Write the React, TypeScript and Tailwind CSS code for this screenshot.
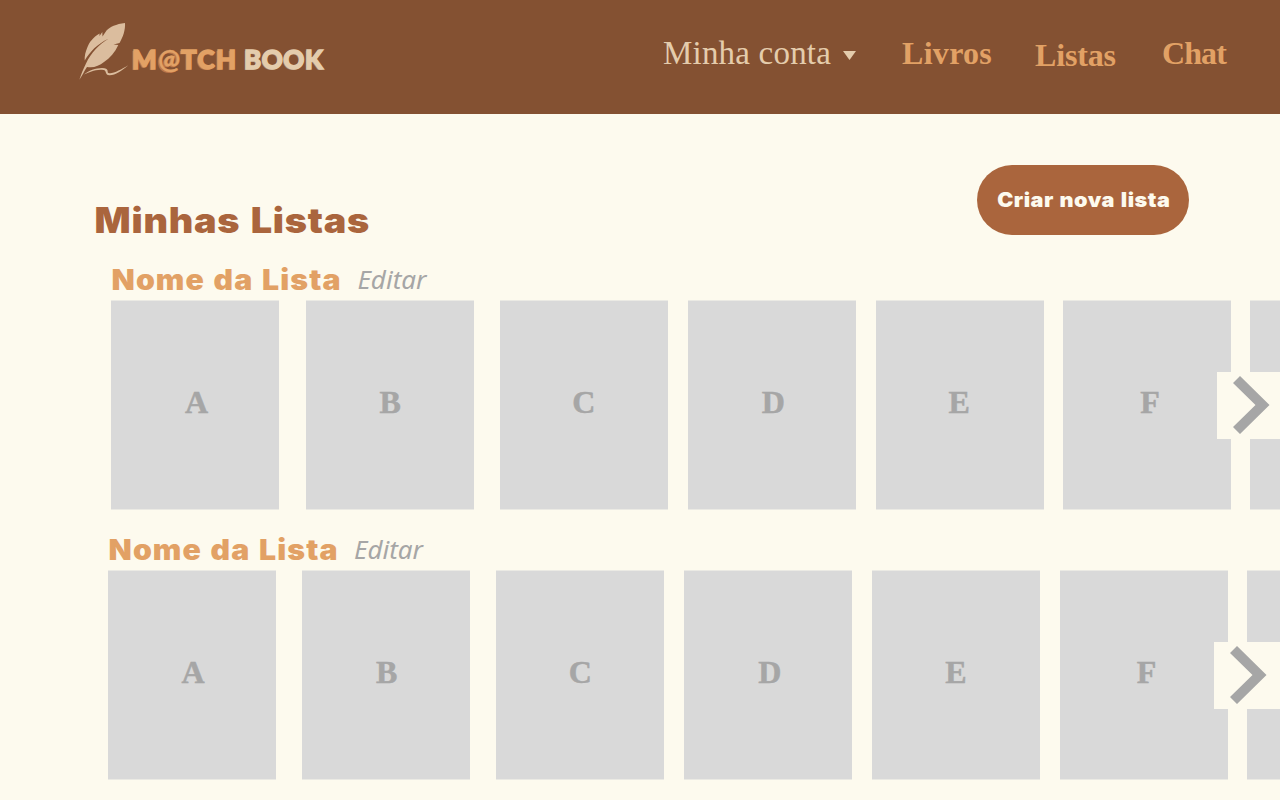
type ListProps = { className: string; arrow: string };

const cards = [
  { letter: 'A', gap: 'ml-0', shift: 'pl-[3px]' },
  { letter: 'B', gap: 'ml-[26.7px]', shift: 'pl-[1px]' },
  { letter: 'C', gap: 'ml-[26px]', shift: 'pl-0' },
  { letter: 'D', gap: 'ml-[20.1px]', shift: 'pl-[3px]' },
  { letter: 'E', gap: 'ml-[20px]', shift: 'pr-[1px]' },
  { letter: 'F', gap: 'ml-[19.7px]', shift: 'pl-[5px]' },
  { letter: '', gap: 'ml-[19px]', shift: 'pl-0' },
];

function Feather() {
  return (
    <svg className="h-[60px] w-[50px] shrink-0" viewBox="0 0 50 60" fill="#dbbd9e">
      <path d="M46 1C37 2 31 5 27.500 8.500L23.500 14.500L23.300 10L20.500 14L20.500 11.500C14 15.500 10.500 20 8.500 25C6.500 29.500 5.400 34 5.700 38.500C11 30 18 22 29.500 16.800C20 22.500 12 31 7 41.500C4.500 46.500 2 52.500 .4 57.800C3 54 5 49.500 8 45C15 46 20 44 25 40C31 36 36 30.500 39.300 23L34.500 22.500L40.500 21C44 15 46.500 8 46 1Z" />
      <path d="M5 52.500C9 48.800 17 46 23 46C31 46 27.500 50.500 29.500 51C33.500 52.500 42 47.500 49.300 43.300C43 48.500 36 53.500 30.500 53.300C25.500 53 28 48.500 24.500 48C17 46.800 10 50.500 5 52.500Z" />
    </svg>
  );
}

function BookList({ className, arrow }: ListProps) {
  return (
    <section className={`relative h-[270px] ${className}`}>
      <div className="flex h-[35px] items-start whitespace-nowrap">
        <h2 className="w-[246.500px] font-['Inter'] text-[28px] leading-[31px] font-black text-[#e2a165]">
          <span className="inline-block origin-left scale-x-[1.08] pl-[0.500px] tracking-[1px] [word-spacing:1.500px]">Nome da Lista</span>
        </h2>
        <a className="font-['Noto_Sans'] text-[26px] leading-[29px] italic text-[#a6a6a6]">Editar</a>
      </div>
      <div className="flex">
        {cards.map((card, i) => (
          <div key={i} className={`flex h-[210px] w-[168px] shrink-0 items-center justify-center border-y border-[#ebeae4] bg-[#d9d9d9] pb-[6px] font-['Liberation_Serif'] text-[32px] leading-none font-bold text-[#a6a6a6] [-webkit-text-stroke:0.500px_#a6a6a6] ${card.gap} ${card.shift}`}>
            <span>{card.letter}</span>
          </div>
        ))}
      </div>
      <button aria-label="Próximos" className={`absolute top-[107px] h-[67px] w-[80px] bg-[#fdfaee] ${arrow}`}>
        <svg className="-mt-px ml-4 h-[58px] w-[37px]" viewBox="0 0 37 58" fill="#a6a6a6">
          <path d="M7 0L36.500 29L7 58L0 51L22.500 29L0 7Z" />
        </svg>
      </button>
    </section>
  );
}

export default function App() {
  return (
    <div className="h-[800px] w-[1280px] overflow-hidden bg-[#fdfaee]">
      <header className="flex h-[114px] items-start bg-[#845132] whitespace-nowrap">
        <div className="flex w-[663px] pt-[22px] pl-[79px]">
          <Feather />
          <div className="flex pt-[21px] pl-[3px] font-['Lato'] text-[26px] leading-[32px] font-black tracking-[0.500px]">
            <span className="w-[112px] tracking-[1.400px] text-[#e2a165] [-webkit-text-stroke:1.400px_#e2a165] [text-shadow:-1.500px_0.500px_0_#bd7447]">
              M<span className="[-webkit-text-stroke:0.300px_#e2a165]">@</span>TCH
            </span>
            <span className="text-[#e4ccac] [-webkit-text-stroke:1.400px_#e4ccac] [text-shadow:-1px_1px_0_#a98b72]">BOOK</span>
          </div>
        </div>
        <nav className="flex font-['Liberation_Serif'] text-[32px] leading-[36px] font-bold text-[#e2a165]">
          <a className="flex w-[239px] pt-[35px] text-[33px] font-normal tracking-[0.200px] text-[#e4ccac]">
            <span className="w-[180px]">Minha conta</span>
            <svg className="mt-4 h-[9px] w-[13px]" viewBox="0 0 13 9" fill="#e4ccac"><path d="M0 0H13L6.500 9Z" /></svg>
          </a>
          <a className="w-[133px] pt-[35px] tracking-[0.300px]">Livros</a>
          <a className="w-[127px] pt-[37px] tracking-[-0.150px]">Listas</a>
          <a className="pt-[35px] tracking-[-0.900px]">Chat</a>
        </nav>
      </header>
      <main>
        <div className="flex h-[151px] items-start justify-between pr-[91px] pl-[94px] font-['Inter'] font-black whitespace-nowrap">
          <h1 className="origin-left scale-x-[1.08] pt-[85px] pl-[0.500px] text-[35px] leading-[42px] tracking-[0.700px] text-[#aa653d] [word-spacing:2px]">Minhas Listas</h1>
          <button className="mt-[51px] h-[69.500px] w-[212.500px] rounded-[35px] bg-[#aa653d] text-[20px] text-[#fdfaee]">
            <span className="inline-block scale-x-[1.08] pl-[1.500px] tracking-[0.450px] [word-spacing:1px]">Criar nova lista</span>
          </button>
        </div>
        <BookList className="pl-[111px]" arrow="left-[1217px]" />
        <BookList className="pl-[107.600px]" arrow="left-[1213.600px]" />
      </main>
    </div>
  );
}
